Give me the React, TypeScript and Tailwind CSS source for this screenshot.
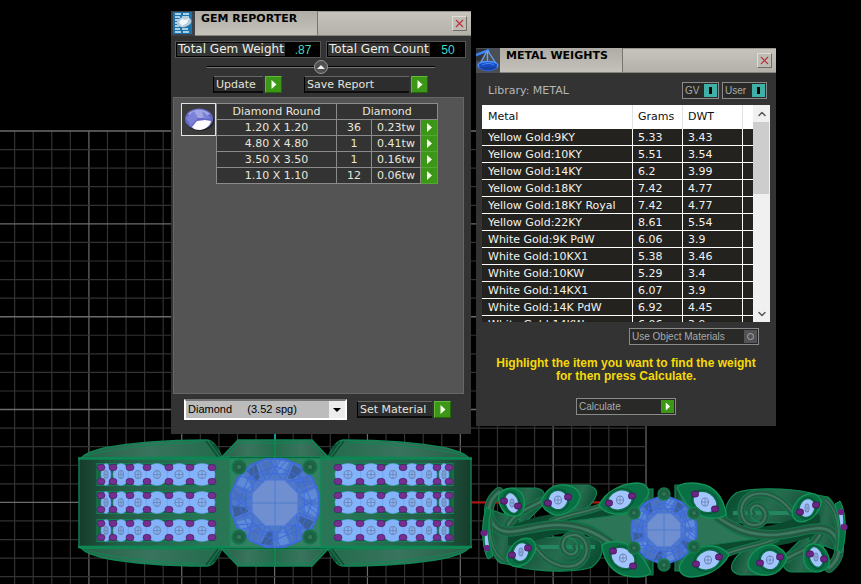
import React from "react";
import { ChevronDown, ChevronUp, X } from "lucide-react";

const gemRows = [
  { size: "1.20 X 1.20", count: 36, weight: "0.23tw" },
  { size: "4.80 X 4.80", count: 1, weight: "0.41tw" },
  { size: "3.50 X 3.50", count: 1, weight: "0.16tw" },
  { size: "1.10 X 1.10", count: 12, weight: "0.06tw" },
];

const metals = [
  ["Yellow Gold:9KY", "5.33", "3.43"],
  ["Yellow Gold:10KY", "5.51", "3.54"],
  ["Yellow Gold:14KY", "6.2", "3.99"],
  ["Yellow Gold:18KY", "7.42", "4.77"],
  ["Yellow Gold:18KY Royal", "7.42", "4.77"],
  ["Yellow Gold:22KY", "8.61", "5.54"],
  ["White Gold:9K PdW", "6.06", "3.9"],
  ["White Gold:10KX1", "5.38", "3.46"],
  ["White Gold:10KW", "5.29", "3.4"],
  ["White Gold:14KX1", "6.07", "3.9"],
  ["White Gold:14K PdW", "6.92", "4.45"],
  ["White Gold:14KW", "6.06", "3.9"],
];

/* ---------- viewport drawing ---------- */

const GRID_STEP = 18.57;

const Grid = () => {
  const columns = Array.from({ length: 35 }, (_, i) => ({
    x: 646 - i * GRID_STEP,
    major: i % 5 === 0,
  }));
  const rows = Array.from({ length: 60 }, (_, i) => ({
    y: 131 + i * GRID_STEP,
    major: i % 5 === 0,
  }));

  return (
    <g>
      {columns.map((c) => (
        <line
          key={c.x}
          x1={c.x}
          x2={c.x}
          y1={131}
          y2="100%"
          stroke={c.major ? "#6c6c6c" : "#323232"}
          strokeWidth={1.2}
        />
      ))}
      {rows.map((r) => (
        <line
          key={r.y}
          x1={0}
          x2={646}
          y1={r.y}
          y2={r.y}
          stroke={r.major ? "#6c6c6c" : "#323232"}
          strokeWidth={r.major ? 1.4 : 1.2}
        />
      ))}
    </g>
  );
};

const polar = (r: number, deg: number) => {
  const a = (deg * Math.PI) / 180;
  return `${(r * Math.cos(a)).toFixed(1)},${(r * Math.sin(a)).toFixed(1)}`;
};

const BigGem = ({ cx, cy, r }: { cx: number; cy: number; r: number }) => {
  const spokes = Array.from({ length: 16 }, (_, i) => i * 22.5);
  const eighths = spokes.filter((_, i) => i % 2 === 0);
  const ring = (radius: number, offset: number) =>
    eighths.map((d) => polar(radius, d + offset)).join(" ");

  return (
    <g transform={`translate(${cx} ${cy})`}>
      <polygon
        points={spokes.map((d) => polar(r, d + 11.25)).join(" ")}
        fill="#4f78c8"
        stroke="#3c6ad6"
        strokeWidth={2}
      />
      {spokes.map((d, i) => (
        <polygon
          key={d}
          points={`${polar(r * 0.95, d + 3)} ${polar(r * 0.96, d + 19)} ${polar(r * 0.66, d + 14)} ${polar(r * 0.62, d + 5)}`}
          fill={i % 3 === 0 ? "#5f8ad8" : i % 3 === 1 ? "#3a5f9a" : "#4a72bd"}
        />
      ))}
      <g fill="none" stroke="#3c6ae0" strokeWidth={1}>
        <polygon points={ring(r * 0.82, 0)} />
        <polygon points={ring(r * 0.7, 22.5)} />
        {eighths.map((d) => (
          <path
            key={d}
            d={`M${polar(r * 0.5, d + 22.5)} L${polar(r * 0.75, d)} L${polar(r, d - 8)} M${polar(r * 0.5, d - 22.5)} L${polar(r * 0.75, d)} L${polar(r, d + 8)} M${polar(r * 0.5, d + 22.5)} L${polar(r, d + 22.5)} M${polar(r * 0.65, d)} L${polar(r, d + 16)}`}
          />
        ))}
      </g>
      <polygon
        points={ring(r * 0.55, 22.5)}
        fill="#6f8fd0"
        stroke="#4d7ade"
        strokeWidth={1}
      />
      <path
        d={`M${-r * 0.5} 0H${r * 0.5}M0 ${-r}V${r}`}
        stroke="#4779cc"
        strokeWidth={0.8}
      />
    </g>
  );
};

const GemMark = ({ x, y, rx = 4 }: { x: number; y: number; rx?: number }) => (
  <g fill="none" stroke="#7088b4" strokeWidth={1.1}>
    <ellipse cx={x} cy={y} rx={rx} ry={4} />
    <path d={`M${x - rx} ${y}h${rx * 2}M${x} ${y - 4}v8`} strokeWidth={0.9} />
  </g>
);

const channelGems = [
  { x: 106, rx: 5, mark: 2 },
  { x: 121, rx: 8, mark: 2.5 },
  { x: 138, rx: 10, mark: 3 },
  { x: 157, rx: 11, mark: 3.5 },
  { x: 179, rx: 12, mark: 4 },
  { x: 202, rx: 13, mark: 4 },
];
const channelProngs = [101, 113, 130, 147, 169, 190, 212];

const BandSide = () => (
  <g>
    {/* shoulders, top and bottom */}
    {["", "translate(0 1006) scale(1 -1)"].map((flip) => (
      <g key={flip} transform={flip} stroke="#0f8654" strokeWidth={1.6}>
        <path
          d="M81 458C86 453 93 451 104 448C130 443 170 440 206 440C213 440 216 446 222 457Z"
          fill="url(#shoulder)"
        />
        <path d="M86 456C108 449 150 444 200 442.500" fill="none" strokeWidth={1} />
        <path d="M206 441L218 457M210 441L221 456M214 444L219 450" stroke="#0b5234" />
        <path d="M222 457L238 440H275V457Z" fill="url(#shoulder)" />
        <path d="M226 457L240 443H275" fill="none" strokeWidth={1} />
      </g>
    ))}
    <rect x={79} y={458} width={196} height={90} fill="url(#band)" />
    <path d="M79 458V548" stroke="#127a50" strokeWidth={1.5} />
    <path d="M78 458.500H230M78 547H230" stroke="#0d8754" strokeWidth={2.5} />

    {[474.5, 502.5, 530.5].map((y) => (
      <g key={y}>
        <rect
          x={97}
          y={y - 11}
          width={118}
          height={22}
          fill="#16653f"
          stroke="#0f8452"
        />
        {channelGems.map((g) => (
          <ellipse
            key={g.x}
            cx={g.x}
            cy={y}
            rx={g.rx}
            ry={11}
            fill="#83b3fa"
            stroke="#6c9be6"
            strokeWidth={0.6}
          />
        ))}
        {channelGems.map((g) => (
          <GemMark key={g.x} x={g.x} y={y} rx={g.mark} />
        ))}
        {channelProngs.map((x) => (
          <g key={x} fill="#742f91" stroke="#4d2068" strokeWidth={0.7}>
            <ellipse cx={x} cy={y - 7} rx={4} ry={3.2} />
            <ellipse cx={x} cy={y + 7} rx={4} ry={3.2} />
          </g>
        ))}
      </g>
    ))}
  </g>
);

const GreenProng = ({ x, y, r = 7 }: { x: number; y: number; r?: number }) => (
  <g>
    <circle cx={x} cy={y} r={r} fill="#1f6344" stroke="#137a4c" strokeWidth={1.4} />
    <circle cx={x} cy={y} r={r * 0.4} fill="#31785a" stroke="#14563a" strokeWidth={0.8} />
  </g>
);

const BandRing = () => (
  <g>
    <BandSide />
    <g transform="translate(550 0) scale(-1 1)">
      <BandSide />
    </g>
    <path d="M230 458V548M320 458V548" stroke="#1b8356" />
    <rect x={230} y={459} width={90} height={88} fill="#328262" stroke="#128b59" />
    <BigGem cx={275} cy={503} r={45} />
    <GreenProng x={239} y={467} />
    <GreenProng x={310} y={467} />
    <GreenProng x={239} y={537} />
    <GreenProng x={310} y={537} />
  </g>
);

const Vine = ({ d, width = 7 }: { d: string; width?: number }) => (
  <g fill="none" strokeLinecap="round">
    <path d={d} stroke="#0f7b4b" strokeWidth={width + 2} />
    <path d={d} stroke="#255a42" strokeWidth={width} />
    <path d={d} stroke="#3d7860" strokeWidth={width / 3} />
  </g>
);

type LeafProps = {
  d: string;
  x: number;
  y: number;
  rx: number;
  ry: number;
  angle: number;
  prongs: number[][];
};

const Leaf = ({ d, x, y, rx, ry, angle, prongs }: LeafProps) => (
  <g>
    <path d={d} fill="#087044" stroke="#129458" strokeWidth={1.4} />
    <g transform={`rotate(${angle} ${x} ${y})`}>
      <ellipse cx={x} cy={y} rx={rx + 2} ry={ry + 2} fill="none" stroke="#075332" />
      <ellipse cx={x} cy={y} rx={rx} ry={ry} fill="#a3c5ff" />
    </g>
    <GemMark x={x} y={y} rx={rx > 7 ? 3.5 : 2} />
    {prongs.map(([px, py]) => (
      <rect
        key={px}
        x={px - 3.5}
        y={py - 3}
        width={7}
        height={6}
        rx={2.5}
        fill="#6b2482"
        stroke="#431256"
        strokeWidth={0.8}
      />
    ))}
  </g>
);

const VineSide = () => (
  <g>
    {/* side walls behind the leaves */}
    <g fill="url(#wall)" stroke="#108550" strokeWidth={1.2}>
      <path d="M512 488H536C545 489 546 495 543 505L520 528H500Z" />
      <path d="M560 485H588C597 488 598 492 595 498C590 508 578 515 562 516Z" />
      <path d="M517 537H598C606 548 602 559 592 567C580 572 545 573 517 567Z" />
      <path d="M489 509C484 530 490 555 500 563L518 566L520 520Z" />
      <path d="M642 489H653V575H638Z" />
    </g>
    <path
      d="M508 528C550 506 580 518 646 498V556C610 552 600 533 570 533C545 534 525 548 508 545Z"
      fill="#0b4a2f"
    />
    <path
      d="M570 521C594 519 615 514 648 512V546H616C604 530 590 523 570 521Z"
      fill="#2d7557"
      stroke="#0e7849"
    />
    <path d="M560 522C582 522 598 527 610 543L593 535Z" fill="#083d27" stroke="#0e8851" />
    <path d="M535 547H595" stroke="#258561" strokeWidth={4} />

    <Vine d="M508 525C516 511 526 510 542 501" />
    <Vine d="M552 521C572 513 592 512 609 503" width={5} />
    <Vine d="M499 492C489 500 486 511 492 522C502 542 529 525 556 525C580 525 596 532 613 545" width={8} />
    <Vine d="M536 548C546 562 562 570 576 565C591 559 590 537 575 535C562 534 559 548 567 553C573 557 580 551 576 546" width={6} />
    <Vine d="M490 512C488 532 491 552 503 560" width={4} />
    <path d="M568 538C577 538 580 548 574 553" fill="none" stroke="#13965a" />

    <path
      d="M487 507C481 517 481 548 488 559L493 556C489 543 487 523 491 511Z"
      fill="#087044"
      stroke="#129458"
    />
    <path d="M487 531L489 546L487 552C484 543 484 533 487 531Z" fill="#a3c5ff" />
    <rect x={480.500} y={530} width={7} height={6} rx={2.5} fill="#6b2482" />
    <rect x={484} y={545} width={6} height={6} rx={2.5} fill="#6b2482" />

    <Leaf
      d="M499 495C502 489 511 486 518 490C525 494 526 506 522 513C516 519 506 515 502 509C499 504 498 499 499 495Z"
      x={512} y={503} rx={6} ry={10} angle={-18}
      prongs={[[504, 501], [518, 506]]}
    />
    <Leaf
      d="M541 502C546 488 554 484 565 485C575 486 581 492 580 498C577 509 565 516 555 515C548 513 542 508 541 502Z"
      x={558} y={500} rx={9} ry={9} angle={-25}
      prongs={[[548, 503], [568, 497]]}
    />
    <Leaf
      d="M599 505C605 493 619 484 636 483C647 483 651 490 647 497C640 509 629 515 615 514C605 513 601 508 599 505Z"
      x={620} y={500} rx={12} ry={9} angle={-22}
      prongs={[[609, 503], [632, 496]]}
    />
    <Leaf
      d="M507 556C511 543 522 536 531 539C537 543 537 550 532 557C527 566 515 569 510 564C507 561 506 559 507 556Z"
      x={521} y={552} rx={7} ry={9} angle={20}
      prongs={[[512, 555], [528, 548]]}
    />
    <Leaf
      d="M602 545C610 540 623 541 632 547C641 553 646 563 651 572C648 578 633 578 623 575C611 571 603 559 602 545Z"
      x={623} y={558} rx={12} ry={9} angle={32}
      prongs={[[613, 551], [633, 566]]}
    />
  </g>
);

const VineRing = () => (
  <g>
    <VineSide />
    <g transform="rotate(180 664 530)">
      <VineSide />
    </g>
    <BigGem cx={664} cy={530} r={33} />
    <GreenProng x={664} y={494} r={6} />
    <GreenProng x={664} y={565} r={6} />
    <GreenProng x={634} y={513} r={6} />
    <GreenProng x={634} y={548} r={6} />
    <GreenProng x={694} y={513} r={6} />
    <GreenProng x={694} y={547} r={6} />
  </g>
);

const Viewport = () => (
  <svg className="absolute inset-0 h-full w-full" aria-hidden="true">
    <defs>
      <linearGradient id="band" x1="0" x2="1">
        <stop offset="0" stopColor="#163c2b" />
        <stop offset="0.18" stopColor="#235d46" />
        <stop offset="0.6" stopColor="#287354" />
        <stop offset="1" stopColor="#2c7d5c" />
      </linearGradient>
      <linearGradient id="shoulder" x1="0" x2="1">
        <stop offset="0" stopColor="#286047" />
        <stop offset="0.5" stopColor="#39745e" />
        <stop offset="1" stopColor="#236b4b" />
      </linearGradient>
      <linearGradient id="wall" x1="0" x2="1" y2="0.3">
        <stop offset="0" stopColor="#0c4a30" />
        <stop offset="0.6" stopColor="#286c50" />
        <stop offset="1" stopColor="#0d5135" />
      </linearGradient>
    </defs>
    <Grid />
    <path d="M275 434V441" stroke="#12969a" strokeWidth={2} />
    <path d="M471 502.500H600" stroke="#b81509" strokeWidth={2} />
    <BandRing />
    <VineRing />
  </svg>
);

/* ---------- window chrome ---------- */

const ReportIcon = () => (
  <svg viewBox="0 0 24 25" className="h-[25px] w-6">
    <rect width="24" height="25" fill="#3d4147" />
    <rect x="2" y="1" width="19" height="22" fill="#1c73aa" />
    <path
      d="M4 3h6M12 3h6M4 6h5M11 6h7M4 9h4M4 12h3M4 15h4M4 18h5M11 18h6M4 21h6M12 21h6"
      stroke="#d9eef8"
      strokeWidth="1.4"
    />
    <ellipse cx="13" cy="11" rx="7.500" ry="5" fill="#b7cddb" transform="rotate(-12 13 11)" />
    <path d="M8 11l3-3 4 1 3-2-2 5-5 3z" fill="#f2f8fb" />
  </svg>
);

const ScaleIcon = () => (
  <svg viewBox="0 0 24 25" className="h-[25px] w-6">
    <rect width="24" height="25" fill="#4b4e54" />
    <path d="M0 1h11L4 13H0z" fill="#303338" />
    <path d="M0 7l13-5" stroke="#3d86f5" strokeWidth="2.5" />
    <path d="M11 3L3 18M12 3l9 14M11.500 3v11" stroke="#65a5f5" strokeWidth="1.3" fill="none" />
    <ellipse cx="12" cy="17.500" rx="10" ry="4" fill="#164bc5" stroke="#4f92fa" strokeWidth="1.300" />
    <path d="M3 19c3 5 15 5 18 0" fill="#1740a0" stroke="#2a66d8" />
    <path d="M6 17c4-2 9-2 12 0" stroke="#4c8bf4" fill="none" />
  </svg>
);

type WindowProps = {
  title: string;
  icon: React.ReactNode;
  className: string;
  children: React.ReactNode;
};

const ToolWindow = ({ title, icon, className, children }: WindowProps) => (
  <section className={`absolute w-[300px] bg-[#333333] ${className}`}>
    <header className="flex h-[25px] border-b border-[#85837b] bg-[#b9b7af]">
      {icon}
      <h2 className="w-[123px] border-r border-[#77756e] bg-linear-to-b from-[#aeaca4] to-[#c4c2ba] pl-1.5 text-[11px] leading-[15px] font-bold whitespace-nowrap text-black">
        {title}
      </h2>
      <div className="flex flex-1 items-center justify-end border-t border-[#96948c] bg-linear-to-b from-[#c6c4bc] to-[#b3b1a9] pr-1">
        <button
          aria-label={`Close ${title}`}
          className="flex size-[15px] items-center justify-center border border-t-[#dedcd4] border-r-[#706e66] border-b-[#706e66] border-l-[#dedcd4] bg-[#bebcb4]"
        >
          <X className="size-[13px] text-[#b5303a]" strokeWidth={2} />
        </button>
      </div>
    </header>
    {children}
  </section>
);

const PlayIcon = () => (
  <svg viewBox="0 0 15 15" className="size-full">
    <path d="M5.500 3v9l5-4.500z" fill="#f4ffe9" />
  </svg>
);

const ActionButton = ({ label, className }: { label: string; className: string }) => (
  <button className="flex h-[17px] items-center gap-0.5 text-[11px] leading-[15px]">
    <span
      className={`h-[17px] border-t border-l border-t-[#666] border-l-black bg-[#2d2d2d] pl-0.5 text-left text-[#e4e4dc] shadow-[inset_0_-2px_0_#0c0c0c] ${className}`}
    >
      {label}
    </span>
    <span className="size-[17px] border border-t-[#60b83c] border-r-[#22660c] border-b-[#22660c] border-l-[#60b83c] bg-[#3c9717]">
      <PlayIcon />
    </span>
  </button>
);

const Total = ({ label, value, className }: { label: string; value: string; className: string }) => (
  <div className="flex h-[17px] border border-[#555] text-xs">
    <span className={`border border-black pl-px leading-[13px] whitespace-nowrap text-[#eeeee6] ${className}`}>
      {label}
    </span>
    <output className="w-[34px] bg-black text-center font-['Liberation_Sans',sans-serif] leading-4 text-[#45d9c4]">
      {value}
    </output>
  </div>
);

const GemReporter = () => (
  <ToolWindow title="GEM REPORTER" icon={<ReportIcon />} className="top-[11px] left-[171px]">
    <div className="flex justify-between pt-[5px] pr-[5px] pl-1">
      <Total label="Total Gem Weight" value=".87" className="w-[110px]" />
      <Total label="Total Gem Count" value="50" className="w-[104px]" />
    </div>

    {/* collapse handle */}
    <div className="mx-9 mt-[2px] flex h-[14px] items-center">
      <div className="h-0.5 flex-1 border-t border-black bg-[#777]" />
      <button
        aria-label="Collapse"
        className="flex size-[14px] items-center justify-center rounded-full border border-[#999] bg-[#505050]"
      >
        <svg viewBox="0 0 8 6" className="h-[6px] w-2">
          <path d="M0 5l4-4 4 4z" fill="#eee" />
        </svg>
      </button>
      <div className="h-0.5 flex-1 border-t border-black bg-[#777]" />
    </div>

    <div className="mt-[2px] flex gap-[22px] pl-[42px]">
      <ActionButton label="Update" className="w-[50px]" />
      <ActionButton label="Save Report" className="w-[105px]" />
    </div>

    <div className="mt-1 mr-[7px] ml-[2px] h-[297px] border border-[#666] bg-[#545454] pt-[5px] pl-[7px]">
      <div className="flex items-start">
        <div className="flex h-[33px] w-[35px] items-center justify-center border border-[#e4e4e0] bg-[#3b3b3b]">
          <svg viewBox="0 0 30 25" className="h-[25px] w-[30px]">
            <ellipse cx="16" cy="14" rx="14" ry="10" fill="#242424" />
            <ellipse cx="15" cy="12" rx="14" ry="10.500" fill="#6468c4" />
            <path d="M4 7c5-6 17-6 22 0l-7 4H11z" fill="#a1a5e5" />
            <path d="M2 11l8-7 4 7-7 8zM18 4l9 7-7 1z" fill="#7b82d8" />
            <path d="M8 20l5-6 8-1 6 1c-1 5-5 8-11 9-4 0-7-1-8-3z" fill="#fff" />
          </svg>
        </div>
        <table className="w-[222px] table-fixed border-collapse bg-[#333] text-center text-[11px] leading-[15px] text-[#e8e6dc]">
          <colgroup>
            <col className="w-[120px]" />
            <col className="w-[35px]" />
            <col className="w-[49px]" />
            <col className="w-[17px]" />
          </colgroup>
          <thead>
            <tr>
              <th className="border border-[#8b8b8b] p-0 font-normal">Diamond Round</th>
              <th colSpan={3} className="border border-[#8b8b8b] p-0 font-normal">
                Diamond
              </th>
            </tr>
          </thead>
          <tbody>
            {gemRows.map((row) => (
              <tr key={row.size}>
                <td className="border border-[#8b8b8b] p-0">{row.size}</td>
                <td className="border border-[#8b8b8b] p-0">{row.count}</td>
                <td className="border border-[#8b8b8b] p-0">{row.weight}</td>
                <td className="border border-[#59a53a] p-0">
                  <button
                    aria-label={`Show ${row.size}`}
                    className="block h-[15px] w-full bg-[#3c9717]"
                  >
                    <PlayIcon />
                  </button>
                </td>
              </tr>
            ))}
          </tbody>
        </table>
      </div>
    </div>

    <div className="flex items-center justify-between pt-[5px] pr-5 pb-[14px] pl-[13px]">
      <div className="relative w-[163px]">
        <select
          aria-label="Material"
          className="block h-[21px] w-full appearance-none border-2 border-t-[#777] border-r-white border-b-white border-l-white bg-[#bcbcbc] pl-0.5 font-['Liberation_Sans',sans-serif] text-[11px] text-black"
        >
          <option>{"Diamond\u00a0\u00a0\u00a0\u00a0\u00a0(3.52 spg)"}</option>
        </select>
        <span className="pointer-events-none absolute top-0.5 right-0.5 flex h-[17px] w-4 items-center justify-center bg-[#ededed]">
          <svg viewBox="0 0 8 4" className="h-1 w-2">
            <path d="M0 0h8L4 4z" fill="#000" />
          </svg>
        </span>
      </div>
      <ActionButton label="Set Material" className="w-[75px]" />
    </div>
  </ToolWindow>
);

const LibraryToggle = ({ label, className }: { label: string; className: string }) => (
  <label
    className={`flex h-[17px] items-center justify-between border border-[#8a8a8a] bg-[#292927] pr-px pl-0.5 font-['Liberation_Sans',sans-serif] text-[10px] text-[#a9a9a9] ${className}`}
  >
    {label}
    <input
      type="checkbox"
      defaultChecked
      className="size-[13px] appearance-none bg-[#3fb0a8] bg-[linear-gradient(#000,#000)] bg-[length:3px_7px] bg-center bg-no-repeat"
    />
  </label>
);

const MetalWeights = () => (
  <ToolWindow title="METAL WEIGHTS" icon={<ScaleIcon />} className="top-12 left-[476px]">
    <div className="flex items-center justify-between pt-[9px] pr-[9px] pl-3">
      <span className="text-[11px] leading-[15px] text-[#b5b5b5]">Library: METAL</span>
      <div className="flex gap-[3px]">
        <LibraryToggle label="GV" className="w-[37px]" />
        <LibraryToggle label="User" className="w-[45px]" />
      </div>
    </div>

    <div className="mx-1.5 mt-1.5 flex h-[217px] overflow-hidden">
      <div className="flex-1">
        <table className="w-full table-fixed border-separate border-spacing-0 bg-[#23221f] text-[11px] leading-[14px] text-[#f2f2ee]">
          <colgroup>
            <col className="w-[151px]" />
            <col className="w-[50px]" />
            <col className="w-[60px]" />
            <col />
          </colgroup>
          <thead>
            <tr className="h-6 bg-white text-left text-[#111]">
              <th className="border-r border-[#e2e2e2] p-0 pl-1.5 font-normal">Metal</th>
              <th className="border-r border-[#e2e2e2] p-0 pl-[5px] font-normal">Grams</th>
              <th className="border-r border-[#e2e2e2] p-0 pl-[5px] font-normal">DWT</th>
              <th className="p-0" />
            </tr>
          </thead>
          <tbody>
            {metals.map(([name, grams, dwt]) => (
              <tr key={name}>
                <td className="border-r border-b border-white p-0 pt-0.5 pl-1.5 whitespace-nowrap">{name}</td>
                <td className="border-r border-b border-white p-0 pt-0.5 pl-[5px]">{grams}</td>
                <td className="border-r border-b border-white p-0 pt-0.5 pl-[5px]">{dwt}</td>
                <td className="border-b border-white p-0" />
              </tr>
            ))}
          </tbody>
        </table>
      </div>
      <div className="flex w-[17px] flex-col bg-[#f0f0f0]">
        <button aria-label="Scroll up" className="flex h-[17px] items-center justify-center">
          <ChevronUp className="size-3 text-[#555]" strokeWidth={3} />
        </button>
        <div className="h-[72px] w-4 bg-[#cdcdcd]" />
        <button aria-label="Scroll down" className="mt-auto flex h-[17px] items-center justify-center">
          <ChevronDown className="size-3 text-[#555]" strokeWidth={3} />
        </button>
      </div>
    </div>

    <div className="flex flex-col items-center pt-1.5 pb-[11px] font-['Liberation_Sans',sans-serif]">
      <label className="mr-[17px] flex h-[17px] w-[130px] items-center justify-between self-end border border-[#8a8a8a] bg-[#292927] pr-px pl-0.5 text-[10px] text-[#a9a9a9]">
        Use Object Materials
        <input
          type="checkbox"
          className="flex size-[13px] appearance-none items-center justify-center bg-[#525257] before:size-[7px] before:rounded-full before:border before:border-[#aaa] before:content-['']"
        />
      </label>
      <p className="mt-3 text-center text-xs leading-[13px] font-bold whitespace-nowrap text-[#f5d90a]">
        Highlight the item you want to find the weight
        <br />
        for then press Calculate.
      </p>
      <button className="mt-[15px] flex h-[17px] w-[100px] items-center justify-between border border-[#8a8a8a] bg-[#292927] pr-px pl-0.5 text-[10px] text-[#a9a9a9]">
        Calculate
        <span className="size-[13px] bg-[#3c9717]">
          <PlayIcon />
        </span>
      </button>
    </div>
  </ToolWindow>
);

const App = () => (
  <main className="relative min-h-screen overflow-hidden bg-black font-['DejaVu_Sans',Verdana,sans-serif]">
    <Viewport />
    <GemReporter />
    <MetalWeights />
  </main>
);

export default App;
